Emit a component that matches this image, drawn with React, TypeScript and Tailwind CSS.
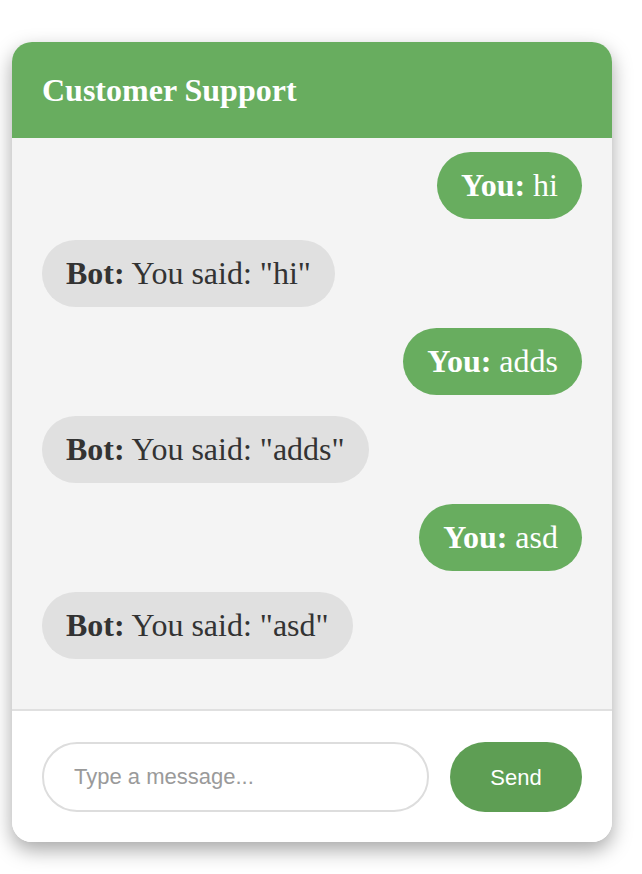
import React from "react";

const messages: { from: "user" | "bot"; text: string }[] = [
  { from: "user", text: "hi" },
  { from: "bot", text: 'You said: "hi"' },
  { from: "user", text: "adds" },
  { from: "bot", text: 'You said: "adds"' },
  { from: "user", text: "asd" },
  { from: "bot", text: 'You said: "asd"' },
];

export default function App() {
  return (
    <div className="min-h-[874px] bg-white pl-[12px] pt-[42px]">
      <div className="flex h-[800px] w-[600px] flex-col overflow-hidden rounded-[20px] bg-white shadow-[0_8px_20px_rgba(0,0,0,0.35)]">
        <div className="flex h-[96px] items-center bg-[#68ad5f] px-[30px]">
          <h2 className="text-[32px] font-bold text-white [font-family:'Liberation_Serif',serif]">
            Customer Support
          </h2>
        </div>
        <div className="flex flex-1 flex-col gap-[21px] bg-[#f4f4f4] px-[30px] pt-[14px] [font-family:'Liberation_Serif',serif]">
          {messages.map((m, i) =>
            m.from === "user" ? (
              <div
                key={i}
                className="self-end rounded-full bg-[#68ad5f] px-[24px] py-[15px] text-[32px] leading-[37px] text-white"
              >
                <strong>You:</strong> {m.text}
              </div>
            ) : (
              <div
                key={i}
                className="self-start rounded-full bg-[#e0e0e0] px-[24px] py-[15px] text-[32px] leading-[37px] text-[#333]"
              >
                <strong>Bot:</strong> {m.text}
              </div>
            )
          )}
        </div>
        <div className="flex items-center gap-[21px] border-t-2 border-[#e0e0e0] bg-white px-[30px] pb-[30px] pt-[31px] [font-family:'Liberation_Sans',Arial,sans-serif]">
          <input
            type="text"
            placeholder="Type a message..."
            className="h-[70px] w-[387px] rounded-full border-2 border-[#dddddd] bg-white px-[30px] text-[22px] text-[#333] outline-none placeholder:text-[#9a9a9a]"
          />
          <button className="h-[70px] w-[132px] rounded-full bg-[#5e9e54] text-[22px] text-white">
            Send
          </button>
        </div>
      </div>
    </div>
  );
}
